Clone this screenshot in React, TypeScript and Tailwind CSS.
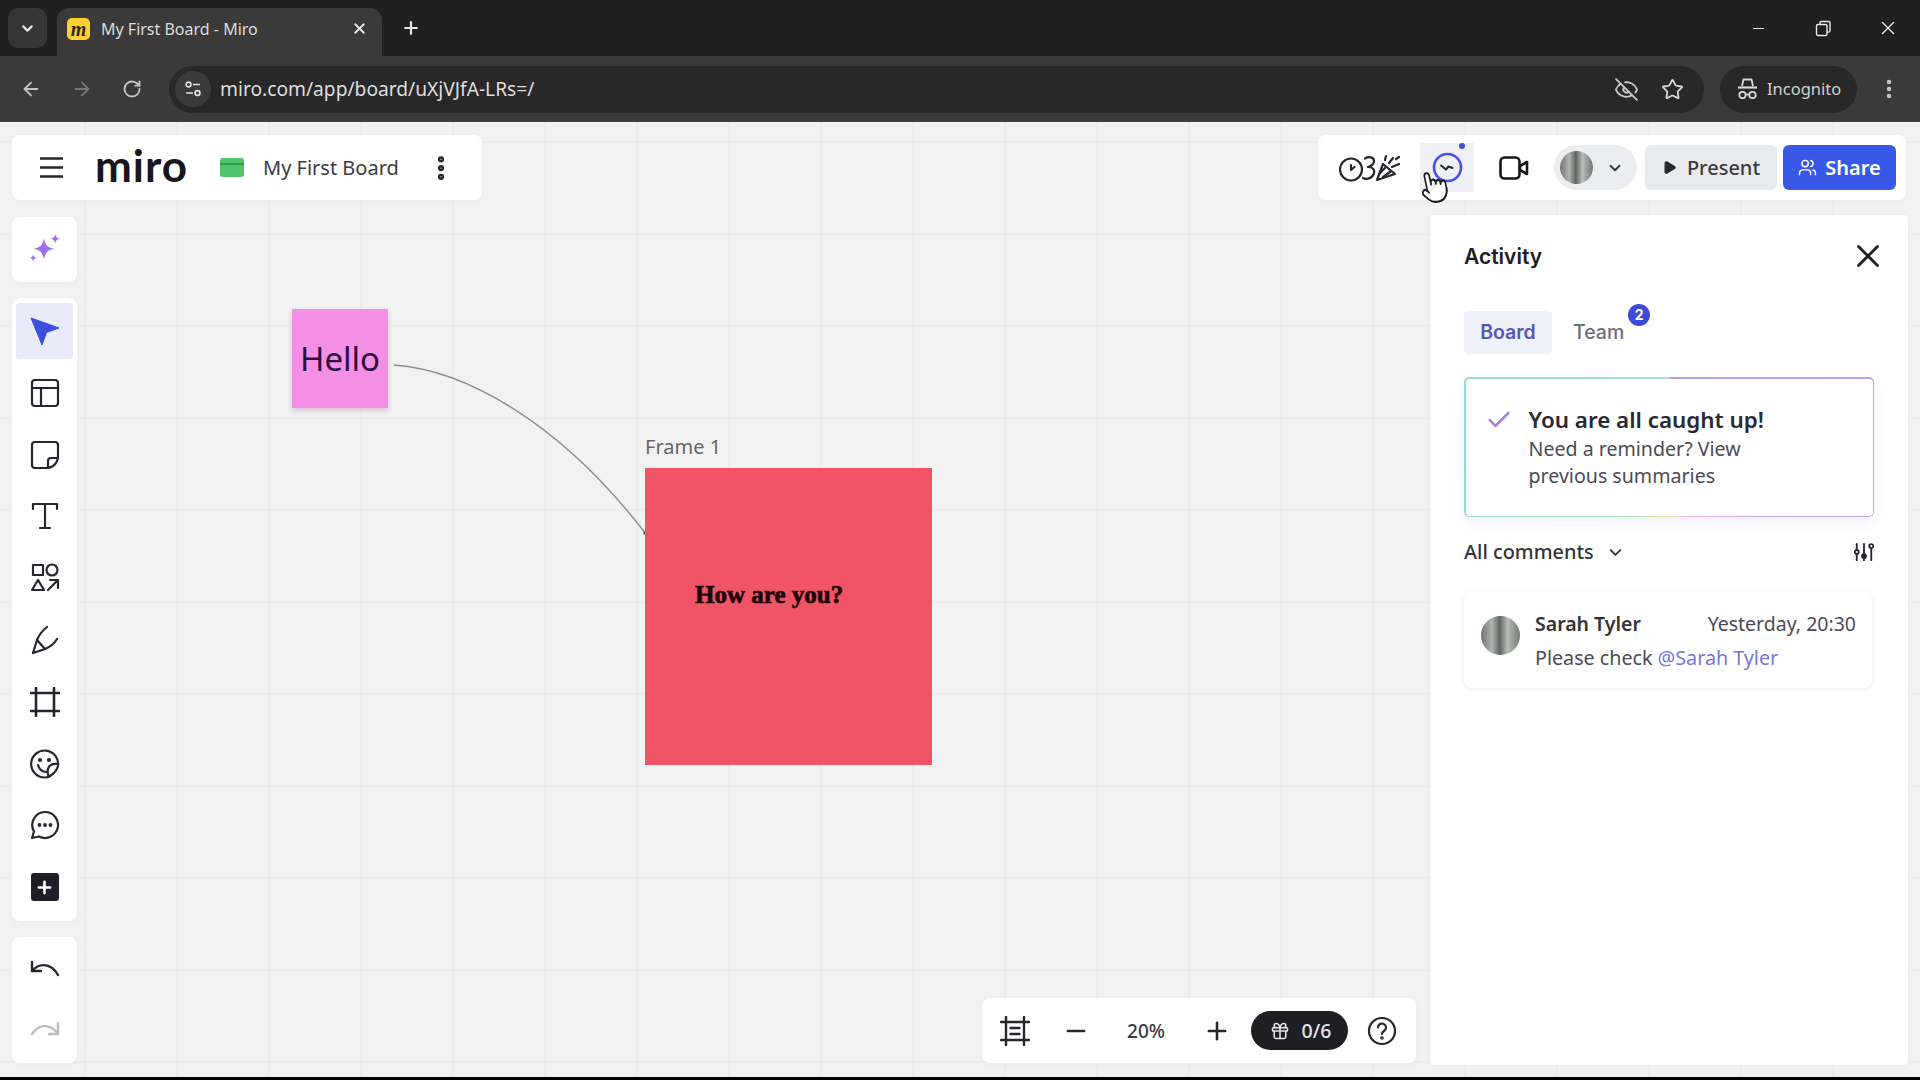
import {
  ArrowLeft,
  ArrowRight,
  Check,
  ChevronDown,
  EllipsisVertical,
  EyeOff,
  Gift,
  Minus,
  Play,
  Plus,
  Pointer,
  RotateCw,
  Star,
  Users,
  X,
} from "lucide-react";

const INK = "#26262e";

function Tool({ children, active }: { children: React.ReactNode; active?: boolean }) {
  return (
    <div
      className={`flex h-[56px] w-[57px] items-center justify-center rounded-[4px] ${
        active ? "bg-[#e9ebfb]" : ""
      }`}
    >
      {children}
    </div>
  );
}

function Svg({ children, size = 30 }: { children: React.ReactNode; size?: number }) {
  return (
    <svg
      width={size}
      height={size}
      viewBox="0 0 30 30"
      fill="none"
      stroke={INK}
      strokeWidth="2.2"
      strokeLinecap="round"
      strokeLinejoin="round"
    >
      {children}
    </svg>
  );
}

function Avatar({ className }: { className: string }) {
  return (
    <div
      className={`rounded-full bg-[linear-gradient(90deg,#6f7572,#aeb5b0_28%,#5f6562_48%,#b9bdb8_68%,#747873)] ${className}`}
    />
  );
}

function BrowserChrome() {
  return (
    <>
      <div className="flex h-[56px] items-end justify-between bg-[#202020] pl-[8px] pr-[21px]">
        <div className="flex h-full items-end">
          <div className="mb-[8px] flex h-[40px] w-[39px] items-center justify-center rounded-[10px] bg-[#363636]">
            <ChevronDown size={17} strokeWidth={3} color="#e4e4e4" />
          </div>
          <div className="ml-[10px] flex h-[48px] w-[325px] items-center rounded-t-[12px] bg-[#3a3a3a] pb-[7px] pl-[10px] pr-[14px]">
            <div className="flex h-[22px] w-[23px] items-center justify-center rounded-[5px] bg-[#ffd02f] font-['Liberation_Serif',serif] text-[20px] font-bold italic leading-none text-[#2a2a20]">
              m
            </div>
            <span className="ml-[11px] flex-1 text-[16px] text-[#dcdcdc]">My First Board - Miro</span>
            <X size={17} strokeWidth={2.6} color="#e8e8e8" />
          </div>
          <div className="mb-[18px] ml-[19px]">
            <Plus size={20} strokeWidth={2.6} color="#e8e8e8" />
          </div>
        </div>
        <div className="mb-[17px] flex items-center gap-[48px]">
          <Minus size={17} strokeWidth={1.6} color="#e8e8e8" />
          <svg width="17" height="17" viewBox="0 0 17 17" fill="none" stroke="#e8e8e8" strokeWidth="1.4">
            <rect x="1.5" y="4.5" width="10.5" height="11" rx="1.5" />
            <path d="M5 4.5V2.8A1.3 1.3 0 0 1 6.3 1.5h7.4a1.3 1.3 0 0 1 1.3 1.3v8a1.3 1.3 0 0 1-1.3 1.3H12" />
          </svg>
          <X size={22} strokeWidth={1.4} color="#e8e8e8" className="ml-[-3px]" />
        </div>
      </div>
      <div className="flex h-[66px] items-center bg-[#3a3a3a] pl-[20px] pr-[19px]">
        <ArrowLeft size={22} strokeWidth={2} color="#c4c4c4" />
        <ArrowRight size={22} strokeWidth={2} color="#767676" className="ml-[29px]" />
        <RotateCw size={20} strokeWidth={2.2} color="#c4c4c4" className="ml-[29px]" />
        <div className="ml-[27px] flex h-[47px] flex-1 items-center rounded-full bg-[#282828] pl-[6px] pr-[20px]">
          <div className="flex h-[36px] w-[36px] items-center justify-center rounded-full bg-[#3a3a3a]">
            <svg width="18" height="18" viewBox="0 0 18 18" fill="none" stroke="#e2e2e2" strokeWidth="1.7">
              <circle cx="4.5" cy="4.5" r="2.4" />
              <path d="M9 4.5h7M2 13h7" />
              <circle cx="13.5" cy="13" r="2.4" />
            </svg>
          </div>
          <span className="ml-[9px] flex-1 text-[19.2px] text-[#dedede]">miro.com/app/board/uXjVJfA-LRs=/</span>
          <EyeOff size={25} strokeWidth={1.8} color="#c8c8c8" />
          <Star size={23} strokeWidth={1.9} color="#d4d4d4" className="ml-[22px]" />
        </div>
        <div className="ml-[16px] flex h-[47px] w-[137px] items-center rounded-full bg-[#282828] pl-[17px]">
          <svg width="21" height="24" viewBox="0 0 21 24" fill="none" stroke="#d8d8d8" strokeWidth="1.8">
            <path d="M5 9l1.5-6.5h8L16 9" />
            <path d="M1 10.5h19" strokeWidth="2.2" />
            <circle cx="5.5" cy="18" r="3.2" />
            <circle cx="15.5" cy="18" r="3.2" />
            <path d="M8.7 17.5h3.6" />
          </svg>
          <span className="ml-[9px] text-[16.5px] text-[#cfcfcf]">Incognito</span>
        </div>
        <EllipsisVertical size={24} strokeWidth={2.4} color="#c8c8c8" className="ml-[20px]" />
      </div>
    </>
  );
}

function BoardObjects() {
  return (
    <div className="absolute inset-0 overflow-hidden bg-[#f2f2f2] bg-[linear-gradient(#ededed_2px,transparent_2px),linear-gradient(90deg,#ededed_2px,transparent_2px)] bg-[size:92px_92px] bg-[position:84px_19px]">
      <svg className="absolute left-0 top-0" width="1920" height="955" viewBox="0 0 1920 955" fill="none">
        <path d="M394 243C465 248 560 300 646 412" stroke="#8e8e8e" strokeWidth="1.4" />
        <circle cx="645" cy="411" r="1.6" fill="#555555" />
      </svg>
      <div className="absolute left-[292px] top-[187px] flex h-[99px] w-[96px] items-center justify-center bg-[#f48fe5] text-[33px] text-[#2b0d3f] shadow-[0_3px_5px_#d9c6d6]">
        Hello
      </div>
      <span className="absolute left-[645px] top-[311px] text-[20px] leading-[28px] text-[#666666]">Frame 1</span>
      <div className="absolute left-[645px] top-[346px] h-[297px] w-[287px] bg-[#f25467] pl-[50px] pt-[109px] font-['Liberation_Serif',serif] text-[25px] font-bold leading-[36px] text-[#1d0508] [-webkit-text-stroke:0.7px_#1d0508]">
        How are you?
      </div>
    </div>
  );
}

function TopLeftBar() {
  return (
    <div className="flex h-[65px] w-[470px] items-center rounded-[8px] bg-white pl-[28px] shadow-[0_2px_6px_#ececec]">
      <svg width="23" height="23" viewBox="0 0 23 23" stroke="#26262e" strokeWidth="2.4">
        <path d="M0 2.5h23M0 11.5h23M0 20.5h23" />
      </svg>
      <span className="mb-[5px] ml-[32px] w-[92px] font-['Lato',sans-serif] text-[44px] font-bold leading-[40px] tracking-[1px] text-[#16161c]">
        miro
      </span>
      <div className="ml-[33px] h-[19px] w-[24px] rounded-[3px] bg-[#4fc46a] pt-[5px]">
        <div className="h-[2px] bg-[#2f9b4b]" />
      </div>
      <span className="ml-[19px] text-[20px] text-[#3a3a42]">My First Board</span>
      <EllipsisVertical size={30} strokeWidth={3} color={INK} className="ml-[27px]" />
    </div>
  );
}

function TopRightBar() {
  return (
    <div className="mr-[2px] flex h-[65px] w-[588px] items-center rounded-[8px] bg-white pl-[21px] shadow-[0_2px_6px_#ececec]">
      <svg width="62" height="28" viewBox="0 0 62 28" fill="none" stroke="#26262e" strokeWidth="2.2" strokeLinecap="round" strokeLinejoin="round">
        <circle cx="12" cy="15.5" r="11" />
        <path d="M12 11v5l3.500-3" />
        <path d="M26 4.500c3-2 9-2 9 2.500 0 3-3 5-6 6 4 0 7 2 6 6-1 5-7 7-11 5" />
        <path d="M38 26l6-16 12 10z" />
        <path d="M46 14l-6 6M51 18l-7 5" />
        <path d="M50 9l4-5M53 13l7-3M46 6l1-4M57 5l3-2" />
      </svg>
      <div className="relative ml-[19px] flex h-[49px] w-[54px] items-center justify-center bg-[#eef0f6]">
        <svg width="31" height="31" viewBox="0 0 31 31" fill="none">
          <circle cx="15.5" cy="15.5" r="13.5" stroke="#4a50e0" strokeWidth="2.6" />
          <path d="M9 13.5l5 4 2.5-3 4 1.5" stroke="#26262e" strokeWidth="2" strokeLinecap="round" strokeLinejoin="round" />
        </svg>
        <div className="absolute right-[9px] top-[0px] h-[6px] w-[6px] rounded-full bg-[#3c4ddb]" />
      </div>
      <svg className="ml-[25px]" width="30" height="24" viewBox="0 0 30 24" fill="none" stroke="#16161c" strokeWidth="2.6" strokeLinejoin="round">
        <rect x="1.5" y="1.5" width="19" height="21" rx="4" />
        <path d="M21 10l7-4v12l-7-4z" />
      </svg>
      <div className="ml-[25px] flex h-[45px] w-[83px] items-center rounded-full bg-[#ecedf1] pl-[6px]">
        <Avatar className="h-[33px] w-[33px]" />
        <ChevronDown size={18} strokeWidth={2.6} color="#3a3a42" className="ml-[13px]" />
      </div>
      <div className="ml-[8px] flex h-[45px] w-[132px] items-center justify-center gap-[10px] rounded-[6px] bg-[#e9eaef] text-[20px] font-medium text-[#3a3a42]">
        <Play size={15} fill="#26262e" stroke="#26262e" />
        Present
      </div>
      <div className="ml-[6px] flex h-[45px] w-[113px] items-center justify-center gap-[8px] rounded-[6px] bg-[#3859e8] text-[20px] font-semibold text-white">
        <Users size={19} strokeWidth={1.8} />
        Share
      </div>
    </div>
  );
}

function ToolColumn() {
  return (
    <div className="mb-[2px] mt-[17px] flex w-[65px] flex-col justify-between">
      <div className="flex h-[65px] items-center justify-center rounded-[8px] bg-white shadow-[0_2px_6px_#ececec]">
        <svg width="34" height="34" viewBox="0 0 30 30" fill="#a06ee8">
          <path d="M14 5c1.5 6 3 7.5 9 9-6 1.5-7.500 3-9 9-1.500-6-3-7.500-9-9 6-1.500 7.500-3 9-9z" />
          <path d="M24 1c.6 2.600 1.400 3.400 4 4-2.600.6-3.400 1.400-4 4-.6-2.600-1.400-3.400-4-4 2.600-.6 3.400-1.400 4-4z" />
          <path d="M4.500 19c.5 2 1 2.500 3 3-2 .5-2.500 1-3 3-.5-2-1-2.500-3-3 2-.5 2.500-1 3-3z" />
        </svg>
      </div>
      <div className="flex h-[623px] flex-col items-center gap-[5.8px] rounded-[8px] bg-white pt-[5px] shadow-[0_2px_6px_#ececec]">
        <Tool active>
          <svg width="30" height="30" viewBox="0 0 30 30" fill="#3c4fe0">
            <path d="M1 2l28 10-12.500 4.500L12 29z" stroke="#3c4fe0" strokeWidth="1" strokeLinejoin="round" />
          </svg>
        </Tool>
        <Tool>
          <Svg>
            <rect x="2" y="2" width="26" height="26" rx="3" />
            <path d="M2 10h26M11 10v18" />
          </Svg>
        </Tool>
        <Tool>
          <Svg>
            <path d="M5 2h20a3 3 0 0 1 3 3v11c0 7-5 12-12 12H5a3 3 0 0 1-3-3V5a3 3 0 0 1 3-3z" />
            <path d="M27 18h-6a3 3 0 0 0-3 3v6" />
          </Svg>
        </Tool>
        <Tool>
          <Svg>
            <path d="M3 8V3h24v5M15 3v24M10 27h10" />
          </Svg>
        </Tool>
        <Tool>
          <Svg>
            <rect x="3" y="2" width="10" height="10" />
            <circle cx="22" cy="7" r="5.500" />
            <path d="M8 17l6 10H2z" />
            <path d="M18 27l9-9M20 17h8v8" />
          </Svg>
        </Tool>
        <Tool>
          <Svg>
            <path d="M3 28l4-13C9 10 12 6 17 2" />
            <path d="M3 28l12-4c5-2 9-5 12-10" />
            <path d="M7 15l8 9" />
          </Svg>
        </Tool>
        <Tool>
          <Svg>
            <path d="M1 6h28M1 24h28M6 1v28M24 1v28" strokeWidth="2.600" />
          </Svg>
        </Tool>
        <Tool>
          <Svg>
            <path d="M28 17A13.500 13.500 0 1 0 15 28.500c2 0 3.500-.5 5-1.500 4-2.500 7-6 8-10z" />
            <path d="M28 15c-5-.5-9 1-10 5s0 6 1 7.500" />
            <path d="M8 16c1 4 4 6.500 8 7" />
            <circle cx="10" cy="11" r="1" fill="#26262e" />
            <circle cx="19" cy="11" r="1" fill="#26262e" />
          </Svg>
        </Tool>
        <Tool>
          <Svg>
            <path d="M15 2a13 13 0 1 1-6 24.500L2 28l2-6.500A13 13 0 0 1 15 2z" />
            <circle cx="9.500" cy="15" r=".8" fill="#26262e" />
            <circle cx="15" cy="15" r=".8" fill="#26262e" />
            <circle cx="20.500" cy="15" r=".8" fill="#26262e" />
          </Svg>
        </Tool>
        <Tool>
          <div className="flex h-[28px] w-[28px] items-center justify-center rounded-[3px] bg-[#1e1e26]">
            <Plus size={19} strokeWidth={3.4} color="white" />
          </div>
        </Tool>
      </div>
      <div className="flex h-[126px] flex-col items-center justify-center gap-[41px] rounded-[8px] bg-white shadow-[0_2px_6px_#ececec]">
        <svg width="30" height="20" viewBox="0 0 30 20" fill="none" stroke="#26262e" strokeWidth="2.400" strokeLinecap="round" strokeLinejoin="round">
          <path d="M2 2v9h9" />
          <path d="M2 11C8 4 20 1 28 15" />
        </svg>
        <svg width="30" height="20" viewBox="0 0 30 20" fill="none" stroke="#bdbdc2" strokeWidth="2.400" strokeLinecap="round" strokeLinejoin="round">
          <path d="M28 2v11h-9" />
          <path d="M28 13C22 4 10 1 2 13" />
        </svg>
      </div>
    </div>
  );
}

function ZoomBar() {
  return (
    <div className="mb-[2px] mr-[14px] flex h-[65px] w-[434px] items-center self-end rounded-[8px] bg-white pl-[18px] shadow-[0_2px_6px_#ececec]">
      <svg width="30" height="30" viewBox="0 0 30 30" fill="none" stroke="#26262e" strokeWidth="2.400" strokeLinecap="round">
        <path d="M1 6h28M1 24h28M6 1v28M24 1v28" />
        <path d="M10.500 12h9M10.500 18h9" />
      </svg>
      <Minus size={28} strokeWidth={2.200} color={INK} className="ml-[32px]" />
      <span className="ml-[34px] w-[44px] pt-[1px] text-center text-[19px] font-medium text-[#3a3a42]">20%</span>
      <Plus size={28} strokeWidth={2.200} color={INK} className="ml-[35px]" />
      <div className="ml-[20px] flex h-[39px] w-[97px] items-center justify-center gap-[12px] rounded-full bg-[#1e1e24] pl-[2px] text-[19.500px] font-medium text-[#e4e4e8]">
        <Gift size={20} strokeWidth={1.900} />
        0/6
      </div>
      <svg className="ml-[19px]" width="30" height="30" viewBox="0 0 30 30" fill="none" stroke="#26262e" strokeWidth="2.200" strokeLinecap="round">
        <circle cx="15" cy="15" r="13" />
        <path d="M11 11.500a4 4 0 1 1 6 3.500c-1.500.9-2 1.500-2 3" />
        <circle cx="15" cy="22" r=".7" />
      </svg>
    </div>
  );
}

function ActivityPanel() {
  return (
    <div className="mt-[15px] flex w-[478px] flex-col rounded-[4px] bg-white px-[34px] shadow-[0_0_5px_#e8e8e8]">
      <div className="flex h-[84px] items-center justify-between">
        <h2 className="font-['Inter',sans-serif] text-[21px] font-semibold text-[#1d1d24]">Activity</h2>
        <X size={38} strokeWidth={1.800} color="#1d1d24" className="mb-[2px] mr-[-13px]" />
      </div>
      <div className="mt-[11px] flex items-center pt-[1px]">
        <div className="flex h-[43px] w-[88px] items-center justify-center rounded-[4px] bg-[#eef0fa] font-['Inter',sans-serif] text-[19.500px] font-semibold text-[#5558b8]">
          Board
        </div>
        <div className="relative ml-[21px] font-['Inter',sans-serif] text-[19.500px] font-medium text-[#6d6f7a]">
          Team
          <div className="absolute right-[-26px] top-[-14px] flex h-[22px] w-[22px] items-center justify-center rounded-full bg-[#3b4ad8] text-[14px] font-bold text-white">
            2
          </div>
        </div>
      </div>
      <div className="mt-[23px] rounded-[5px] bg-[conic-gradient(#b7a0ea,#c4a6ee_120deg,#ecb8ee_165deg,#ece78c_182deg,#a7e4b4_205deg,#93dbd2_270deg,#a5e0d8_359deg)] p-[1.500px] shadow-[0_6px_14px_#f2f0fb]">
        <div className="flex h-[137px] rounded-[4px] bg-white pl-[19px] pt-[26px]">
          <Check size={28} strokeWidth={2.200} color="#a97fe0" className="mt-[1px]" />
          <div className="ml-[16px]">
            <div className="text-[22.400px] font-semibold leading-[30px] text-[#2a2a32]">You are all caught up!</div>
            <div className="w-[250px] text-[19.600px] leading-[27px] text-[#4b4b55]">
              Need a reminder? View previous summaries
            </div>
          </div>
        </div>
      </div>
      <div className="mt-[21px] flex h-[28px] items-center">
        <span className="text-[19.900px] font-medium text-[#33333b]">All comments</span>
        <ChevronDown size={19} strokeWidth={2.400} color="#33333b" className="ml-[12px]" />
        <svg className="ml-auto" width="20" height="20" viewBox="0 0 22 22" fill="none" stroke="#26262e" strokeWidth="2" strokeLinecap="round">
          <path d="M3 2v6M3 14v6M11 2v11M11 18v2M19 8v12" />
          <circle cx="3" cy="11" r="2.200" />
          <circle cx="11" cy="15.500" r="2.200" fill="#26262e" />
          <circle cx="19" cy="4.500" r="2.200" />
        </svg>
      </div>
      <div className="mt-[26px] flex h-[96px] w-[408px] items-center rounded-[8px] bg-white pl-[17px] pr-[16px] shadow-[0_1px_4px_#e8e8ec]">
        <Avatar className="mb-[10px] h-[39px] w-[39px]" />
        <div className="ml-[15px] flex-1">
          <div className="flex items-center justify-between pb-[2px] text-[19.500px] leading-[33px]">
            <span className="font-semibold text-[#33333b]">Sarah Tyler</span>
            <span className="text-[#4b4b55]">Yesterday, 20:30</span>
          </div>
          <div className="text-[19.700px] leading-[32px] text-[#4b4b55]">
            Please check <span className="text-[#7377de]">@Sarah Tyler</span>
          </div>
        </div>
      </div>
    </div>
  );
}

export default function App() {
  return (
    <div className="flex h-[1080px] w-[1920px] flex-col overflow-hidden bg-black font-['Noto_Sans',sans-serif]">
      <BrowserChrome />
      <main className="relative flex h-[955px] flex-col pb-[12px] pl-[12px] pr-[12px] pt-[13px]">
        <BoardObjects />
        <div className="relative flex items-center justify-between">
          <TopLeftBar />
          <TopRightBar />
        </div>
        <div className="relative flex flex-1 justify-between">
          <ToolColumn />
          <div className="flex">
            <ZoomBar />
            <ActivityPanel />
          </div>
        </div>
        <Pointer
          size={36}
          strokeWidth={1.400}
          fill="white"
          color="#1d1d24"
          className="absolute left-[1416px] top-[47px] -rotate-12 scale-x-[0.8]"
        />
      </main>
      <div className="h-[3px] bg-black" />
    </div>
  );
}
